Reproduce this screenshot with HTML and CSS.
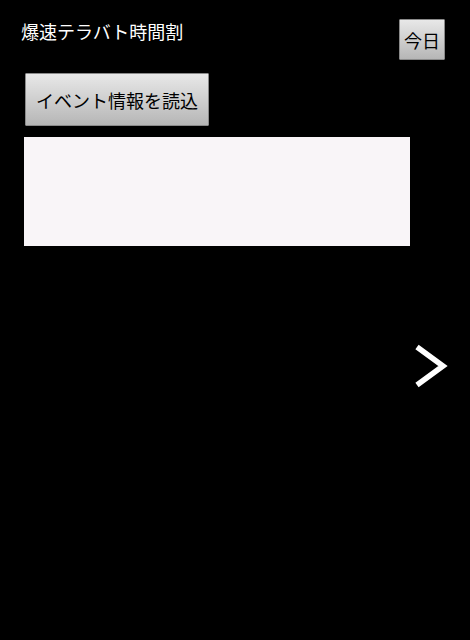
FILE: index.html
```html
<!DOCTYPE html>
<html lang="ja">
<head>
<meta charset="utf-8">
<title>爆速テラバト時間割</title>
<link rel="stylesheet" href="styles.css">
</head>
<body>
<div class="screen">
  <div class="header">
    <div class="title">爆速テラバト時間割</div>
    <button class="btn today">今日</button>
  </div>
  <button class="btn load">イベント情報を読込</button>
  <div class="panel"></div>
  <div class="next">
    <svg width="34" height="44" viewBox="0 0 34 44"><polyline points="3,3 29,22 3,41" fill="none" stroke="#fff" stroke-width="5.5" stroke-linejoin="miter"/></svg>
  </div>
</div>
</body>
</html>
```
FILE: styles.css
```css
html, body {
  margin: 0;
  padding: 0;
  background: #000;
}
.screen {
  position: relative;
  width: 470px;
  height: 640px;
  background: #000;
  font-family: "Noto Sans CJK JP", "Noto Sans", sans-serif;
}
.header {
  display: flex;
  justify-content: space-between;
  align-items: flex-start;
  padding: 19px 25px 0 21px;
}
.title {
  color: #fff;
  font-size: 18px;
  line-height: 24px;
}
.btn {
  font-family: "Noto Sans CJK JP", "Noto Sans", sans-serif;
  color: #000;
  background: linear-gradient(#e8e8e8, #b6b6b6);
  border: 1px solid #8a8a8a;
  border-radius: 1px;
  padding: 0;
  margin: 0;
  box-sizing: border-box;
}
.today {
  width: 46px;
  height: 41px;
  font-size: 18px;
}
.load {
  display: block;
  margin: 13px 0 0 25px;
  width: 184px;
  height: 53px;
  font-size: 18px;
}
.panel {
  margin: 11px 0 0 24px;
  width: 386px;
  height: 109px;
  background: #f9f5f8;
}
.next {
  position: absolute;
  left: 414px;
  top: 344px;
}
.next svg {
  display: block;
}
```
